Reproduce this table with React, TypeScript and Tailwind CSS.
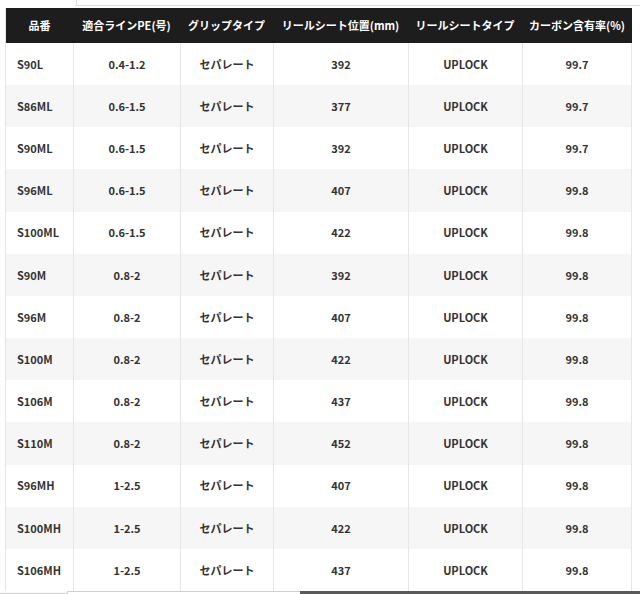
const headers = [
	"品番",
	"適合ラインPE(号)",
	"グリップタイプ",
	"リールシート位置(mm)",
	"リールシートタイプ",
	"カーボン含有率(%)",
];

const rows: [string, string, string, string, string, string][] = [
	["S90L", "0.4-1.2", "セパレート", "392", "UPLOCK", "99.7"],
	["S86ML", "0.6-1.5", "セパレート", "377", "UPLOCK", "99.7"],
	["S90ML", "0.6-1.5", "セパレート", "392", "UPLOCK", "99.7"],
	["S96ML", "0.6-1.5", "セパレート", "407", "UPLOCK", "99.8"],
	["S100ML", "0.6-1.5", "セパレート", "422", "UPLOCK", "99.8"],
	["S90M", "0.8-2", "セパレート", "392", "UPLOCK", "99.8"],
	["S96M", "0.8-2", "セパレート", "407", "UPLOCK", "99.8"],
	["S100M", "0.8-2", "セパレート", "422", "UPLOCK", "99.8"],
	["S106M", "0.8-2", "セパレート", "437", "UPLOCK", "99.8"],
	["S110M", "0.8-2", "セパレート", "452", "UPLOCK", "99.8"],
	["S96MH", "1-2.5", "セパレート", "407", "UPLOCK", "99.8"],
	["S100MH", "1-2.5", "セパレート", "422", "UPLOCK", "99.8"],
	["S106MH", "1-2.5", "セパレート", "437", "UPLOCK", "99.8"],
];

const cols = "grid grid-cols-[67px_107px_93px_135px_114px_110px]";

export default function App() {
	return (
		<div
			className="relative h-[594px] w-[640px] overflow-hidden bg-white"
			style={{ fontFamily: '"Noto Sans CJK JP", "Noto Sans", sans-serif' }}
		>
			<div className="flex h-[6px]">
				<div className="w-[77px] border-r border-[#dcdcdc]" />
				<div className="flex-1 border-b border-[#dcdcdc]" />
			</div>

			<div className="ml-[5px] mt-[2px] w-[627px] border-l border-[#e4e4e4]">
				<div className={`${cols} h-[35px] bg-[#1d1d1d] text-[11px] font-bold text-white`}>
					{headers.map((h) => (
						<div key={h} className="flex items-center justify-center">
							{h}
						</div>
					))}
				</div>

				{rows.map((row, i) => (
					<div
						key={row[0]}
						className={`${cols} h-[42.17px] text-[11px] font-bold text-[#333333] ${
							i % 2 === 1 ? "bg-[#f6f6f6]" : "bg-white"
						}`}
					>
						{row.map((cell, j) => (
							<div
								key={j}
								className={`flex items-center border-[#e6e6e6] ${
									j === 0 ? "pl-[11px]" : "justify-center border-l"
								} ${j === 5 ? "border-r" : ""}`}
							>
								{cell}
							</div>
						))}
					</div>
				))}
			</div>

			<div className="absolute bottom-0 left-0 flex h-[3px] w-full">
				<div className="w-[68px] border-r border-b border-[#cfcfcf]" />
				<div className="w-[232px] border-t border-[#cfcfcf]" />
				<div className="flex-1 bg-[#5a5a5a]" />
			</div>
		</div>
	);
}
